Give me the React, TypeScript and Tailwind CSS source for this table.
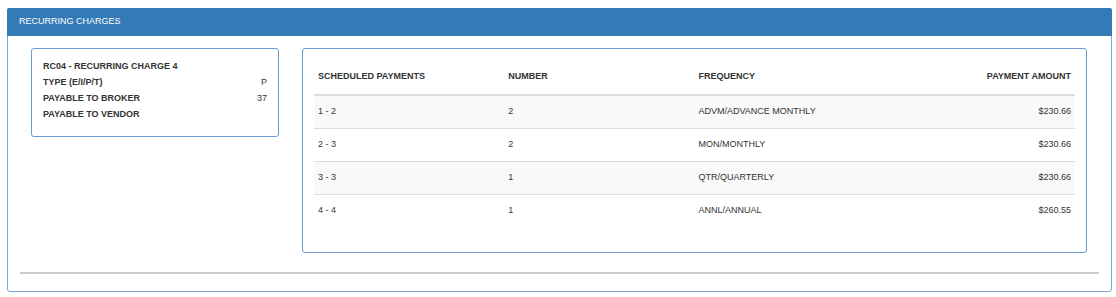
import React from 'react';

const payments = [
  { range: '1 - 2', number: '2', frequency: 'ADVM/ADVANCE MONTHLY', amount: '$230.66' },
  { range: '2 - 3', number: '2', frequency: 'MON/MONTHLY', amount: '$230.66' },
  { range: '3 - 3', number: '1', frequency: 'QTR/QUARTERLY', amount: '$230.66' },
  { range: '4 - 4', number: '1', frequency: 'ANNL/ANNUAL', amount: '$260.55' },
];

const details = [
  { label: 'TYPE (E/I/P/T)', value: 'P' },
  { label: 'PAYABLE TO BROKER', value: '37' },
  { label: 'PAYABLE TO VENDOR', value: '' },
];

export default function App() {
  return (
    <div className="w-[1116px] h-[297px] bg-white pt-[8px] pl-[7px] font-['Liberation_Sans',Arial,sans-serif] text-[9px] text-[#333]">
      {/* Panel */}
      <div className="w-[1105px] h-[284px] border border-[#7aa7d8] rounded-[3px] flex flex-col">
        <div className="h-[28px] bg-[#337ab7] text-white flex items-center px-[12px] rounded-t-[2px] -mx-px -mt-px">
          RECURRING CHARGES
        </div>

        <div className="flex gap-[23px] pl-[23px] pr-[24px] pt-[12px]">
          {/* Charge summary */}
          <div className="w-[248px] h-[89px] shrink-0 border border-[#6b9bd1] rounded-[3px] pt-[10px] px-[11px] font-bold">
            <div className="h-[16px] flex items-center">RC04 - RECURRING CHARGE 4</div>
            {details.map((d) => (
              <div key={d.label} className="h-[16px] flex items-center justify-between">
                <span>{d.label}</span>
                <span className="font-normal">{d.value}</span>
              </div>
            ))}
          </div>

          {/* Scheduled payments */}
          <div className="flex-1 h-[205px] border border-[#6b9bd1] rounded-[3px] pt-[11px] px-[11px]">
            <table className="w-full border-collapse">
              <thead>
                <tr className="h-[35px] border-b-2 border-[#dddddd] font-bold">
                  <th className="w-1/4 text-left font-bold pl-[4px]">SCHEDULED PAYMENTS</th>
                  <th className="w-1/4 text-left font-bold pl-[4px]">NUMBER</th>
                  <th className="w-1/4 text-left font-bold pl-[4px]">FREQUENCY</th>
                  <th className="w-1/4 text-right font-bold pr-[4px]">PAYMENT AMOUNT</th>
                </tr>
              </thead>
              <tbody>
                {payments.map((p, i) => (
                  <tr
                    key={p.range}
                    className={`h-[33px] ${i > 0 ? 'border-t border-[#dddddd]' : ''} ${i % 2 === 0 ? 'bg-[#f9f9f9]' : 'bg-white'}`}
                  >
                    <td className="pl-[4px]">{p.range}</td>
                    <td className="pl-[4px]">{p.number}</td>
                    <td className="pl-[4px]">{p.frequency}</td>
                    <td className="text-right pr-[4px]">{p.amount}</td>
                  </tr>
                ))}
              </tbody>
            </table>
          </div>
        </div>

        <div className="mx-[12px] mt-[19px] h-[2px] bg-[#cccccc]" />
      </div>
    </div>
  );
}
